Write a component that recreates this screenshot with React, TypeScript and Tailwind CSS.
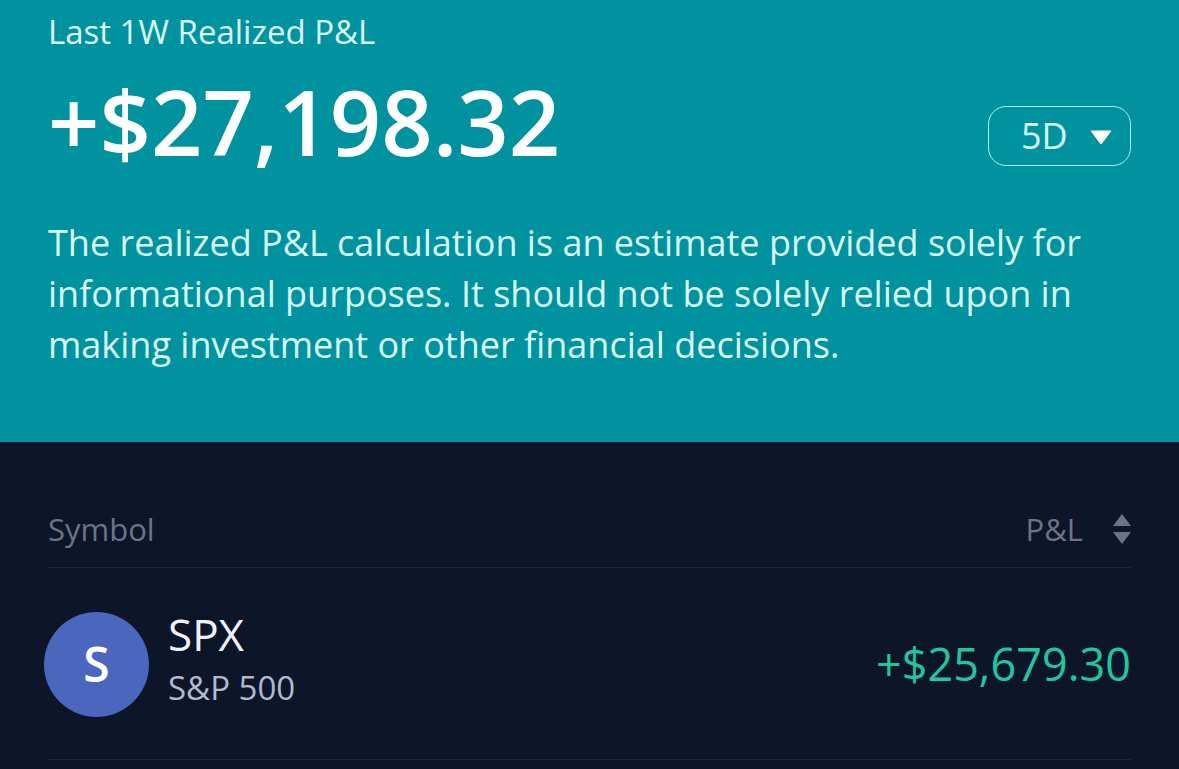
import { useState } from 'react';

const ranges = ['1D', '5D', '1M', '3M', 'YTD'];

interface Position {
  symbol: string;
  name: string;
  pnl: number;
}

const positions: Position[] = [{ symbol: 'SPX', name: 'S&P 500', pnl: 25679.3 }];

function formatPnl(value: number) {
  const amount = Math.abs(value).toLocaleString('en-US', {
    minimumFractionDigits: 2,
    maximumFractionDigits: 2,
  });
  return `${value < 0 ? '-' : '+'}$${amount}`;
}

function RangeSelect() {
  const [range, setRange] = useState('5D');

  return (
    <div className="relative mb-1.5 shrink-0">
      <select
        aria-label="Time range"
        value={range}
        onChange={(e) => setRange(e.target.value)}
        className="block h-[60px] w-[143px] appearance-none rounded-[18px] border border-[#a8f4f4] bg-transparent pl-8 text-[36px] leading-[56px] text-[#d8fafa]"
      >
        {ranges.map((r) => (
          <option key={r} value={r}>
            {r}
          </option>
        ))}
      </select>
      <svg
        viewBox="0 0 22 15"
        className="pointer-events-none absolute top-6 right-[19px] h-[15px] w-[22px] fill-white"
        aria-hidden="true"
      >
        <path d="M1.4 0.5H20.6Q21.8 0.6 21 1.6L12 13.6Q11 14.8 10 13.6L1 1.6Q0.2 0.6 1.4 0.5Z" />
      </svg>
    </div>
  );
}

function PnlSummary() {
  return (
    <section className="bg-[#00929f] px-12 pt-3 pb-18">
      <h1 className="text-[33px] leading-10 text-[#d8fafa]">Last 1W Realized P&amp;L</h1>
      <div className="mt-5 flex items-end justify-between gap-6">
        <p className="text-[90px] leading-[98px] pb-0.5 font-semibold text-white">{formatPnl(27198.32)}</p>
        <RangeSelect />
      </div>
      <p className="mt-[45px] text-[36px] leading-[51px] text-[#d8fafa]">
        The realized P&amp;L calculation is an estimate provided solely for informational purposes. It
        should not be solely relied upon in making investment or other financial decisions.
      </p>
    </section>
  );
}

function SymbolCell({ symbol, name }: { symbol: string; name: string }) {
  return (
    <div className="-ml-1 flex items-center gap-[19px]">
      <div className="flex size-[105px] shrink-0 items-center justify-center rounded-full bg-[#4a66bd] text-[48px] leading-[56px] font-semibold text-white">
        {symbol[0]}
      </div>
      <div className="pb-1">
        <div className="text-[44px] leading-[52px] text-[#eef2ff]">{symbol}</div>
        <div className="text-[33px] leading-[56px] text-[#b3b9d0]">{name}</div>
      </div>
    </div>
  );
}

function PositionsTable() {
  return (
    <section className="px-12 pt-[65px]">
      <table className="w-full border-separate border-spacing-0">
        <thead>
          <tr className="text-[31px] leading-11 text-[#6c7388]">
            <th className="border-b border-[#1c2539] p-0 pb-4 text-left font-normal">Symbol</th>
            <th className="border-b border-[#1c2539] p-0 pb-4 text-right font-normal">
              <button type="button" className="inline-flex items-center gap-7 align-top">
                P&amp;L
                <svg viewBox="0 0 20 32" className="h-8 w-5 fill-[#6c7388]" aria-hidden="true">
                  <path d="M11 1L20 13H2Z" />
                  <path d="M2 19H20L11 31Z" />
                </svg>
              </button>
            </th>
          </tr>
        </thead>
        <tbody>
          {positions.map((p) => (
            <tr key={p.symbol}>
              <td className="border-b border-[#1c2539] p-0 pt-10 pb-[39px]">
                <SymbolCell symbol={p.symbol} name={p.name} />
              </td>
              <td className="border-b border-[#1c2539] p-0 text-right align-middle text-[45px] leading-[56px] text-[#1dc8a0]">
                {formatPnl(p.pnl)}
              </td>
            </tr>
          ))}
        </tbody>
      </table>
    </section>
  );
}

export default function App() {
  return (
    <main className="min-h-screen bg-[#0d1529] font-['Open_Sans','Noto_Sans',sans-serif]">
      <PnlSummary />
      <PositionsTable />
    </main>
  );
}
